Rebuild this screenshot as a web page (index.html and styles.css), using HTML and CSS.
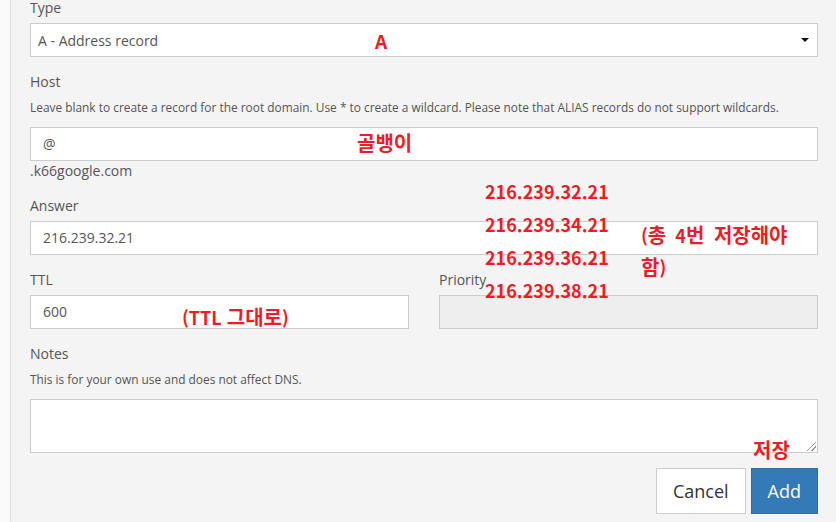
FILE: index.html
```html
<!DOCTYPE html>
<html lang="ko">
<head>
<meta charset="utf-8">
<title>Add record</title>
<link rel="stylesheet" href="styles.css">
</head>
<body>
<div class="shell">
  <div class="panel">
    <form class="form">
      <div class="group first">
        <label class="label">Type</label>
        <div class="select">A - Address record</div>
      </div>
      <div class="group">
        <label class="label">Host</label>
        <p class="help">Leave blank to create a record for the root domain. Use * to create a wildcard. Please note that ALIAS records do not support wildcards.</p>
        <div class="input">@</div>
        <div class="suffix">.k66google.com</div>
      </div>
      <div class="group">
        <label class="label">Answer</label>
        <div class="input">216.239.32.21</div>
      </div>
      <div class="row">
        <div class="group">
          <label class="label">TTL</label>
          <div class="input">600</div>
        </div>
        <div class="group">
          <label class="label">Priority</label>
          <div class="input disabled"></div>
        </div>
      </div>
      <div class="group">
        <label class="label">Notes</label>
        <p class="help">This is for your own use and does not affect DNS.</p>
        <div class="textarea"><span class="grip"></span></div>
      </div>
      <div class="actions">
        <button type="button" class="btn btn-default">Cancel</button>
        <button type="button" class="btn btn-primary">Add</button>
      </div>
    </form>

    <div class="note n-a">A</div>
    <div class="note n-at"><span class="ko">골뱅이</span></div>
    <div class="note n-ips">216.239.32.21<br>216.239.34.21<br>216.239.36.21<br>216.239.38.21</div>
    <div class="note n-total">(<span class="ko">총</span> 4<span class="ko">번 저장해야</span><br><span class="ko">함</span>)</div>
    <div class="note n-ttl">(TTL <span class="ko">그대로</span>)</div>
    <div class="note n-save"><span class="ko">저장</span></div>
  </div>
</div>
</body>
</html>
```

FILE: styles.css
```css
* { box-sizing: border-box; }
html, body {
  margin: 0;
  padding: 0;
  background: #fafafa;
  overflow: hidden;
}
body {
  font-family: "Open Sans", "Noto Sans", sans-serif;
  color: #555;
  width: 836px;
  height: 522px;
}
.shell {
  padding-left: 10px;
  height: 522px;
}
.panel {
  position: relative;
  height: 100%;
  background: #f4f4f4;
  border-left: 1px solid #e3e3e3;
  padding: 0 18px 0 19px;
}
.form {
  display: flex;
  flex-direction: column;
}
.group {
  margin-bottom: 15px;
  display: flex;
  flex-direction: column;
}
.group.first { margin-top: -2px; }
.label {
  font-size: 14px;
  line-height: 20px;
  margin-bottom: 5px;
  color: #555;
}
.help {
  margin: 0 0 10px;
  font-size: 11.9px;
  line-height: 20px;
  color: #555;
  white-space: nowrap;
}
.select, .input, .textarea {
  background: #fff;
  border: 1px solid #ccc;
  height: 34px;
  font-size: 14px;
  line-height: 32px;
  color: #555;
}
.select {
  position: relative;
  padding-left: 7px;
  line-height: 33px;
}
.select::after {
  content: "";
  position: absolute;
  right: 8px;
  top: 14px;
  border-left: 4px solid transparent;
  border-right: 4px solid transparent;
  border-top: 4px solid #111;
}
.input { padding-left: 12px; }
.input.disabled { background: #eee; }
.suffix {
  font-size: 14px;
  line-height: 20px;
  color: #555;
}
.row {
  display: grid;
  grid-template-columns: 1fr 1fr;
  column-gap: 30px;
}
.textarea {
  position: relative;
  height: 54px;
}
.grip {
  position: absolute;
  right: 1px;
  bottom: 1px;
  width: 9px;
  height: 9px;
  background: linear-gradient(135deg, transparent 45%, #999 45%, #999 52%, transparent 52%, transparent 72%, #999 72%, #999 79%, transparent 79%);
}
.actions {
  display: flex;
  justify-content: flex-end;
  gap: 5px;
}
.btn {
  font-family: "Open Sans", "Noto Sans", sans-serif;
  font-size: 18px;
  line-height: 24px;
  height: 46px;
  padding: 10px 16px;
  border: 1px solid #ccc;
  border-radius: 0;
  margin: 0;
}
.btn-default {
  background: #fff;
  color: #333;
}
.btn-primary {
  background: #337ab7;
  border-color: #2e6da4;
  color: #fff;
}
.note {
  position: absolute;
  font-family: "Malgun Gothic", "Noto Sans CJK KR", sans-serif;
  font-weight: 700;
  color: #ee1c25;
  font-size: 18px;
  white-space: nowrap;
}
.ko { font-size: 20px; }
.n-a { left: 364px; top: 29px; font-size: 19px; line-height: 24px; }
.n-at { left: 346px; top: 130px; line-height: 26px; }
.n-ips { left: 474px; top: 175px; line-height: 33px; }
.n-total { left: 630px; top: 219px; line-height: 32px; word-spacing: 4px; }
.n-ttl { left: 171px; top: 304px; line-height: 26px; }
.n-save { left: 742px; top: 437px; line-height: 26px; }
```
